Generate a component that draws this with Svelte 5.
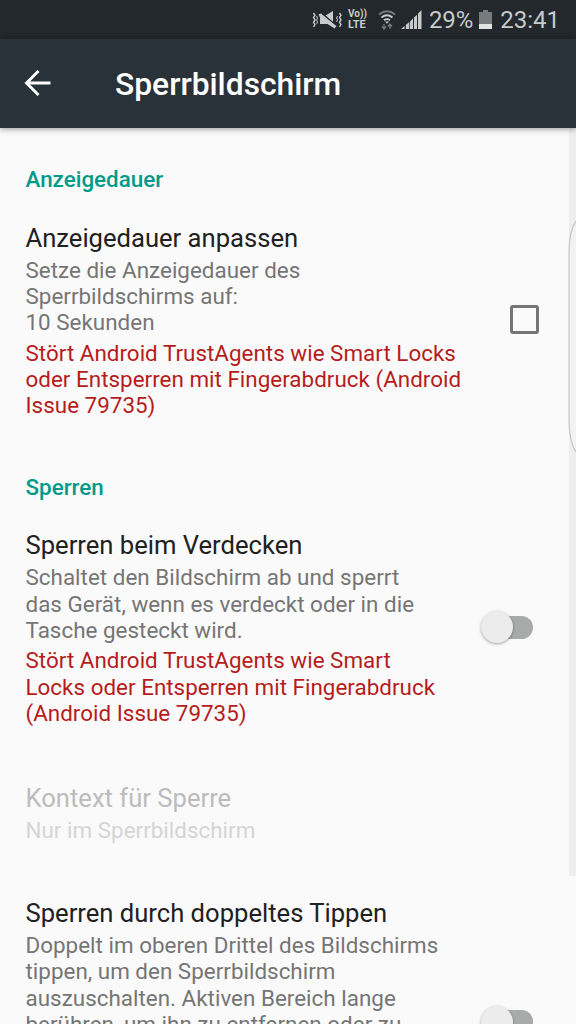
<script lang="ts">
	interface Preference {
		title: string;
		summary: string;
		warning?: string;
		widget?: 'checkbox' | 'switch';
		disabled?: boolean;
	}

	interface Category {
		name: string;
		items: Preference[];
	}

	const categories: Category[] = [
		{
			name: 'Anzeigedauer',
			items: [
				{
					title: 'Anzeigedauer anpassen',
					summary: 'Setze die Anzeigedauer des\nSperrbildschirms auf:\n10 Sekunden',
					warning: 'Stört Android TrustAgents wie Smart Locks\noder Entsperren mit Fingerabdruck (Android\nIssue 79735)',
					widget: 'checkbox',
				},
			],
		},
		{
			name: 'Sperren',
			items: [
				{
					title: 'Sperren beim Verdecken',
					summary: 'Schaltet den Bildschirm ab und sperrt\ndas Gerät, wenn es verdeckt oder in die\nTasche gesteckt wird.',
					warning: 'Stört Android TrustAgents wie Smart\nLocks oder Entsperren mit Fingerabdruck\n(Android Issue 79735)',
					widget: 'switch',
				},
				{
					title: 'Kontext für Sperre',
					summary: 'Nur im Sperrbildschirm',
					disabled: true,
				},
				{
					title: 'Sperren durch doppeltes Tippen',
					summary: 'Doppelt im oberen Drittel des Bildschirms\ntippen, um den Sperrbildschirm\nauszuschalten. Aktiven Bereich lange\nberühren, um ihn zu entfernen oder zu',
					widget: 'switch',
				},
			],
		},
	];

	let checked: Record<string, boolean> = $state({});

	function toggle(item: Preference) {
		if (!item.widget || item.disabled) return;
		checked[item.title] = !checked[item.title];
	}
</script>

<div class="screen">
	<div class="status-bar">
		<svg class="vibrate" width="30" height="20" viewBox="0 0 30 20" fill="none" stroke="#c8cacb">
			<path d="M1.500 3l1.500 2.300-1.500 2.300L3 10l-1.500 2.300L3 14.600 1.500 17" stroke-width="1.400" />
			<path d="M4.500 6l1 2-1 2 1 2-1 2" stroke-width="1" />
			<path d="M27.500 3L29 5.300l-1.500 2.300L29 10l-1.500 2.300 1.500 2.300-1.500 2.400" stroke-width="1.400" />
			<path d="M25.500 6l-1 2 1 2-1 2" stroke-width="1" />
			<path d="M13.500 5.500L21 1v11z" fill="#c8cacb" stroke="none" />
			<path d="M6.500 4.500L9 3.500 24.500 16l-2 2.500-7-4.500H8V7.500z" fill="#c8cacb" stroke="none" />
			<path d="M10 3.500L24 15" stroke="#22282b" stroke-width="1" />
		</svg>
		<span class="volte"><span class="vo">Vo))</span><span>LTE</span></span>
		<svg class="wifi" width="18" height="20" viewBox="0 0 18 20" fill="none" stroke="#c8cacb" stroke-width="1.900">
			<path d="M1 4.500Q9-2 17 4.500" stroke="#747a7c" />
			<path d="M3.500 7.500Q9 3 14.500 7.500M6 10.200Q9 8 12 10.200" />
			<path d="M7 11.500h4L9 13.700z" fill="#c8cacb" stroke="none" />
			<path d="M6 19v-5M4 16.500L6 19l2-2.500M12 14v5M10 16.500L12 14l2 2.500" stroke="#747a7c" stroke-width="1.300" />
		</svg>
		<svg class="signal" width="21" height="20" viewBox="0 0 21 20" fill="#c8cacb">
			<path d="M0 19l3.500-3v3zM4.800 15L8.300 12V19H4.800zM9 11.500L12 8.500V19H9zM13 7.500L16 4.800V19h-3zM17 3.500L20.500 0v19H17z" />
		</svg>
		<span class="percent">29%</span>
		<svg class="battery" width="13" height="20" viewBox="0 0 13 20">
			<path d="M4 0h5v2h4v13H0V2h4z" fill="#777b7d" />
			<rect y="14" width="13" height="5" fill="#e2e3e3" />
		</svg>
		<span class="clock">23:41</span>
	</div>

	<header class="toolbar">
		<button class="back" aria-label="Zurück">
			<svg width="28" height="26" viewBox="0 0 28 26" fill="none" stroke="#fff" stroke-width="2.900">
				<path d="M26.500 13H3M14.500 1L2.500 13l12 12" />
			</svg>
		</button>
		<h1>Sperrbildschirm</h1>
	</header>

	<main class="list">
		{#each categories as category}
			<h2>{category.name}</h2>
			{#each category.items as item}
				<!-- svelte-ignore a11y_click_events_have_key_events, a11y_no_static_element_interactions -->
				<div class="preference" class:disabled={item.disabled} onclick={() => toggle(item)}>
					<div class="texts">
						<div class="title">{item.title}</div>
						<div class="summary">{item.summary}</div>
						{#if item.warning}
							<div class="warning">{item.warning}</div>
						{/if}
					</div>
					{#if item.widget === 'checkbox'}
						<span class="checkbox" class:on={checked[item.title]}></span>
					{:else if item.widget === 'switch'}
						<span class="switch" class:on={checked[item.title]}>
							<span class="thumb"></span>
						</span>
					{/if}
				</div>
			{/each}
		{/each}
	</main>

	<div class="scrollbar"></div>
	<svg class="edge-handle" width="8" height="238" viewBox="0 0 8 238">
		<path d="M9 2C4 8 1 17 1 36v164c0 19 3 29 8 35" fill="#f2f2f2" stroke="#c6c6c6" stroke-width="1.200" />
	</svg>
</div>

<style>
	:global(body) {
		margin: 0;
		background: #fafafa;
	}

	.screen {
		position: relative;
		width: 576px;
		height: 1024px;
		overflow: hidden;
		display: flex;
		flex-direction: column;
		background: #fafafa;
		font-family: Roboto, sans-serif;
	}

	.status-bar {
		flex: none;
		height: 39px;
		box-sizing: border-box;
		padding-right: 16px;
		display: flex;
		align-items: center;
		justify-content: flex-end;
		background: #22282b;
		color: #c8cacb;
		font-size: 24px;
		line-height: 40px;
	}

	.volte {
		display: flex;
		flex-direction: column;
		width: 20px;
		margin: 0 10px 0 6px;
		font-size: 11px;
		font-weight: 700;
		line-height: 11px;
	}

	.vo {
		font-size: 10px;
		line-height: 10px;
	}

	.signal {
		margin: 0 7px 0 5px;
	}

	.battery {
		margin: 0 8px 0 6px;
	}

	.percent {
		letter-spacing: -0.1px;
	}

	.toolbar {
		position: relative;
		z-index: 1;
		flex: none;
		height: 89px;
		display: flex;
		align-items: center;
		background: #283238;
		color: #fff;
		box-shadow: 0 1px 6px rgba(0, 0, 0, 0.4);
	}

	.back {
		width: 115px;
		padding: 0 0 1px 24px;
		border: none;
		background: none;
		text-align: left;
		line-height: 0;
		cursor: pointer;
	}

	h1 {
		margin: 0;
		font-size: 31.8px;
		font-weight: 500;
	}

	.list {
		flex: 1;
		min-height: 0;
		overflow: hidden;
		padding-top: 9px;
	}

	h2 {
		margin: 0;
		padding: 29px 25.5px 4.8px;
		color: #009a8b;
		font-size: 22.4px;
		font-weight: 500;
		line-height: 26.3px;
	}

	.preference {
		display: flex;
		align-items: center;
		justify-content: space-between;
		padding: 25.6px 36.5px 26px 25.5px;
	}

	/* reaches below the fold */
	.preference:last-child {
		height: 249px;
	}

	.preference:last-child .texts {
		align-self: flex-start;
	}

	.title {
		margin-bottom: 4px;
		color: #212121;
		font-size: 25.6px;
		line-height: 30px;
		white-space: nowrap;
	}

	.summary,
	.warning {
		color: #757575;
		font-size: 22.4px;
		line-height: 26.35px;
		letter-spacing: 0.02px;
		white-space: pre;
	}

	.warning {
		margin-top: 4px;
		color: #b71c1c;
	}

	.preference.disabled {
		padding: 30px 25.5px 29.7px;
	}

	.disabled .title {
		color: #bcbcbc;
	}

	.disabled .summary {
		color: #d5d5d5;
	}

	.checkbox {
		flex: none;
		width: 29px;
		height: 29px;
		box-sizing: border-box;
		margin: 0 0.5px 3px 0;
		border: 3px solid #757575;
		border-radius: 3px;
	}

	.checkbox.on {
		background: #009688;
		border-color: #009688;
	}

	.switch {
		flex: none;
		display: flex;
		align-items: center;
		width: 48px;
		height: 23px;
		margin: 0 7px 2px 0;
		border-radius: 12px;
		background: #a9abab;
	}

	.thumb {
		flex: none;
		width: 32px;
		height: 32px;
		margin-left: -4px;
		border-radius: 50%;
		background: #ececec;
		box-shadow: 0 1px 3px rgba(0, 0, 0, 0.35);
	}

	.switch.on .thumb {
		margin-left: 20px;
		background: #009688;
	}

	.scrollbar {
		position: absolute;
		top: 128px;
		right: 0;
		width: 7px;
		height: 748px;
		background: #eeeeee;
	}

	.edge-handle {
		position: absolute;
		top: 218px;
		right: 0;
	}
</style>
